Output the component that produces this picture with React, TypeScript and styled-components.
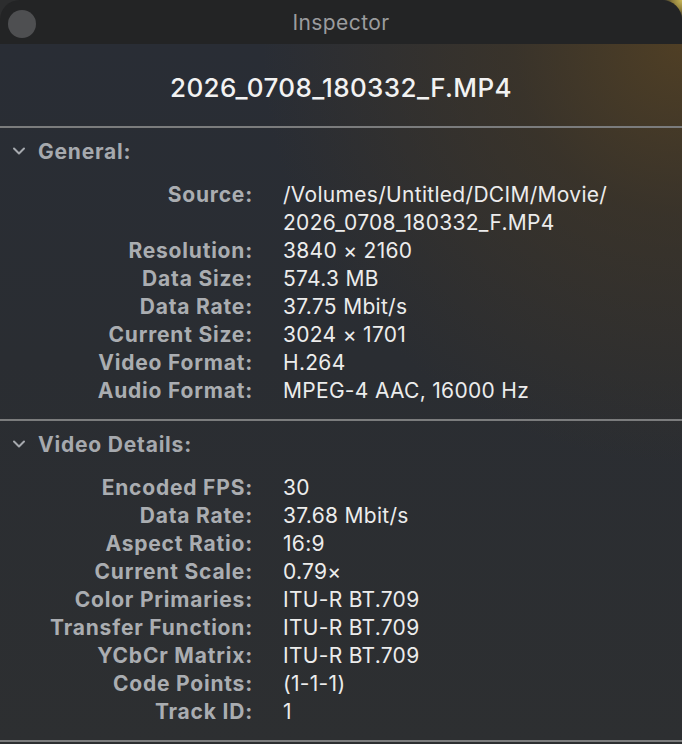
import styled, { createGlobalStyle } from "styled-components";

interface Row {
  label: string;
  value: string[];
}

interface Section {
  title: string;
  rows: Row[];
}

const sections: Section[] = [
  {
    title: "General:",
    rows: [
      { label: "Source:", value: ["/Volumes/Untitled/DCIM/Movie/", "2026_0708_180332_F.MP4"] },
      { label: "Resolution:", value: ["3840 × 2160"] },
      { label: "Data Size:", value: ["574.3 MB"] },
      { label: "Data Rate:", value: ["37.75 Mbit/s"] },
      { label: "Current Size:", value: ["3024 × 1701"] },
      { label: "Video Format:", value: ["H.264"] },
      { label: "Audio Format:", value: ["MPEG-4 AAC, 16000 Hz"] },
    ],
  },
  {
    title: "Video Details:",
    rows: [
      { label: "Encoded FPS:", value: ["30"] },
      { label: "Data Rate:", value: ["37.68 Mbit/s"] },
      { label: "Aspect Ratio:", value: ["16:9"] },
      { label: "Current Scale:", value: ["0.79×"] },
      { label: "Color Primaries:", value: ["ITU-R BT.709"] },
      { label: "Transfer Function:", value: ["ITU-R BT.709"] },
      { label: "YCbCr Matrix:", value: ["ITU-R BT.709"] },
      { label: "Code Points:", value: ["(1-1-1)"] },
      { label: "Track ID:", value: ["1"] },
    ],
  },
];

const Chevron = () => (
  <svg width="14" height="10" viewBox="0 0 14 10" fill="none">
    <path d="M2 2.5 L7 7.5 L12 2.5" stroke="#a6a9ae" strokeWidth="2" strokeLinecap="round" strokeLinejoin="round" />
  </svg>
);

const App = () => {
  return (
    <>
      <GlobalStyle />
      <StWindow>
        <StTitleBar>
          <StCloseDot />
          <StTitle>Inspector</StTitle>
        </StTitleBar>
        <StContent>
          <StFileName>2026_0708_180332_F.MP4</StFileName>
          {sections.map((section) => (
            <StSection key={section.title}>
              <StSectionHeader>
                <Chevron />
                <span>{section.title}</span>
              </StSectionHeader>
              <StGrid>
                {section.rows.map((row) => (
                  <StRow key={row.label}>
                    <StLabel>{row.label}</StLabel>
                    <StValue>
                      {row.value.map((line) => (
                        <div key={line}>{line}</div>
                      ))}
                    </StValue>
                  </StRow>
                ))}
              </StGrid>
            </StSection>
          ))}
        </StContent>
      </StWindow>
    </>
  );
};

export default App;

const GlobalStyle = createGlobalStyle`
  html, body {
    margin: 0;
    padding: 0;
    width: 682px;
    height: 744px;
    overflow: hidden;
    background:
      radial-gradient(circle at 100% 0%, #c9b756 0px, #8a7a3a 10px, transparent 18px),
      #2c2d2e;
  }
  * {
    box-sizing: border-box;
  }
`;

const StWindow = styled.div`
  width: 682px;
  height: 744px;
  border-radius: 20px 20px 0 0;
  overflow: hidden;
  display: flex;
  flex-direction: column;
  font-family: Inter, "Liberation Sans", sans-serif;
`;

const StTitleBar = styled.div`
  position: relative;
  height: 44px;
  flex-shrink: 0;
  background-color: #232425;
  display: flex;
  align-items: center;
  justify-content: center;
`;

const StCloseDot = styled.div`
  position: absolute;
  left: 8px;
  top: 10px;
  width: 28px;
  height: 28px;
  border-radius: 50%;
  background-color: #4e4f51;
`;

const StTitle = styled.div`
  font-size: 21px;
  color: #9b9c9e;
  letter-spacing: 0.4px;
`;

const StContent = styled.div`
  flex: 1;
  background:
    radial-gradient(ellipse 420px 420px at 100% 0%, rgba(86, 66, 34, 0.85) 0%, rgba(70, 56, 34, 0.55) 40%, rgba(0, 0, 0, 0) 100%),
    linear-gradient(180deg, #292d35 0%, #2a2d32 45%, #2d2f31 100%);
`;

const StFileName = styled.div`
  height: 84px;
  display: flex;
  align-items: center;
  justify-content: center;
  padding-top: 4px;
  font-size: 26px;
  font-weight: 500;
  letter-spacing: 0.4px;
  color: #f2f2f2;
  border-bottom: 2px solid #7b7c7d;
`;

const StSection = styled.section`
  padding: 9px 0 14px;
  border-bottom: 2px solid #7b7c7d;
`;

const StSectionHeader = styled.div`
  height: 28px;
  display: flex;
  align-items: center;
  gap: 12px;
  padding-left: 12px;
  font-size: 21px;
  font-weight: 700;
  letter-spacing: 0.8px;
  color: #a6a9ae;
  margin-bottom: 16px;
`;

const StGrid = styled.div`
  display: flex;
  flex-direction: column;
`;

const StRow = styled.div`
  display: grid;
  grid-template-columns: 253px 1fr;
  column-gap: 30px;
  font-size: 21px;
  line-height: 28px;
`;

const StLabel = styled.div`
  text-align: right;
  font-weight: 700;
  letter-spacing: 0.8px;
  color: #aaadb1;
`;

const StValue = styled.div`
  color: #ececec;
  letter-spacing: 0.3px;
`;
